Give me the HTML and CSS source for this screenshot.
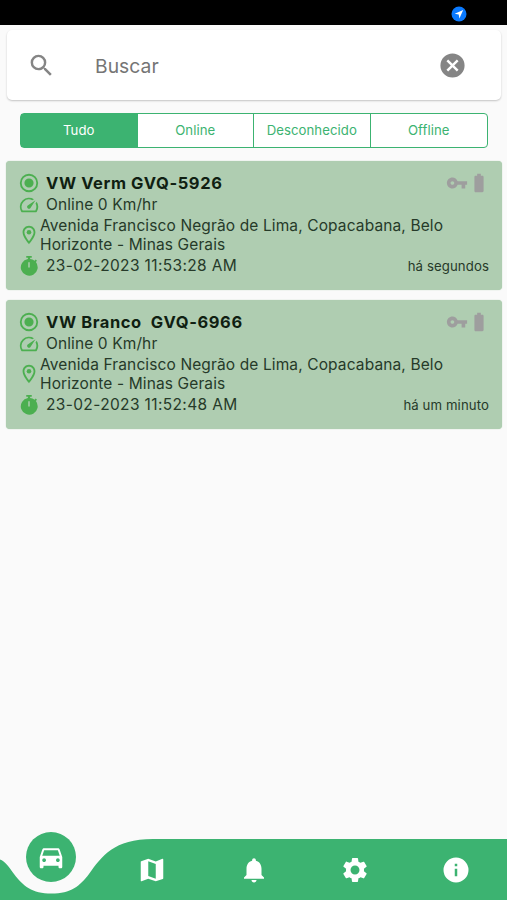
FILE: index.html
```html
<!DOCTYPE html>
<html lang="pt-BR">
<head>
<meta charset="utf-8">
<meta name="viewport" content="width=device-width, initial-scale=1">
<title>Veículos</title>
<link rel="stylesheet" href="styles.css">
</head>
<body>
<svg class="sprite" aria-hidden="true">
  <symbol id="radio" viewBox="0 0 24 24"><path d="M12 7a5 5 0 1 0 0 10 5 5 0 0 0 0-10zm0-5a10 10 0 1 0 0 20 10 10 0 0 0 0-20zm0 18a8 8 0 1 1 0-16 8 8 0 0 1 0 16z"/></symbol>
  <symbol id="speed" viewBox="0 0 24 24"><path d="M20.380 8.570l-1.230 1.850a8 8 0 0 1-.22 7.580H5.070A8 8 0 0 1 15.580 6.850l1.850-1.230A10 10 0 0 0 3.350 19a2 2 0 0 0 1.720 1h13.850a2 2 0 0 0 1.740-1 10 10 0 0 0-.27-10.440zm-9.790 6.840a2 2 0 0 0 2.830 0l5.660-8.490-8.490 5.660a2 2 0 0 0 0 2.830z"/></symbol>
  <symbol id="pin" viewBox="0 0 24 24"><path d="M12 2C8.130 2 5 5.130 5 9c0 5.250 7 13 7 13s7-7.750 7-13c0-3.870-3.130-7-7-7zM7 9c0-2.760 2.240-5 5-5s5 2.240 5 5c0 2.880-2.880 7.190-5 9.880C9.920 16.210 7 11.850 7 9z"/><circle cx="12" cy="9" r="2.500"/></symbol>
  <symbol id="timer" viewBox="0 0 24 24"><path d="M9 1h6v2h-1.800v1.300a9 9 0 0 1 4.900 1.900l1.200-1.200 1.400 1.400-1.200 1.300A9.200 9.200 0 1 1 10.800 4.300V3H9zM11.200 8v5.500h1.600V8z"/></symbol>
  <symbol id="key" viewBox="0 0 24 24"><path d="M12.650 10C11.830 7.670 9.610 6 7 6c-3.310 0-6 2.690-6 6s2.690 6 6 6c2.610 0 4.830-1.670 5.650-4H17v4h4v-4h2v-4H12.650zM7 14c-1.100 0-2-.9-2-2s.9-2 2-2 2 .9 2 2-.9 2-2 2z"/></symbol>
  <symbol id="battery" viewBox="0 0 24 24"><path d="M15.670 4H14V2h-4v2H8.330C7.600 4 7 4.600 7 5.330v15.330C7 21.400 7.600 22 8.330 22h7.330c.74 0 1.340-.6 1.340-1.330V5.330C17 4.600 16.400 4 15.670 4z"/></symbol>
</svg>

<div class="status">
  <svg class="status-location" viewBox="0 0 16 16"><circle cx="8" cy="8" r="7.500" fill="#0a7aff"/><path d="M12.200 3.900 3.700 7.700l4 .7.700 4z" fill="#fff"/></svg>
</div>

<label class="search">
  <svg class="search-icon" viewBox="0 0 24 24"><path d="M15.500 14h-.79l-.28-.27A6.471 6.471 0 0 0 16 9.500 6.500 6.500 0 1 0 9.500 16c1.610 0 3.090-.59 4.230-1.570l.27.28v.79l5 4.990L20.490 19l-4.990-5zm-6 0a4.500 4.500 0 1 1 0-9 4.500 4.500 0 0 1 0 9z"/></svg>
  <span class="search-text">Buscar</span>
  <svg class="search-icon" viewBox="0 0 24 24"><path d="M12 2a10 10 0 1 0 0 20 10 10 0 0 0 0-20zm5 13.590L15.590 17 12 13.410 8.410 17 7 15.590 10.590 12 7 8.410 8.410 7 12 10.590 15.590 7 17 8.410 13.410 12 17 15.590z"/></svg>
</label>

<div class="tabs">
  <div class="tab tab-active">Tudo</div>
  <div class="tab">Online</div>
  <div class="tab">Desconhecido</div>
  <div class="tab">Offline</div>
</div>

<main class="list">
  <article class="card">
    <div class="row row-title"><svg class="ico"><use href="#radio"/></svg><h2 class="name">VW Verm GVQ-5926</h2><span class="flags"><svg class="ico"><use href="#key"/></svg><svg class="ico"><use href="#battery"/></svg></span></div>
    <div class="row"><svg class="ico"><use href="#speed"/></svg><span class="text">Online 0 Km/hr</span></div>
    <div class="row row-address"><svg class="ico"><use href="#pin"/></svg><p class="address">Avenida Francisco Negrão de Lima, Copacabana, Belo<br>Horizonte - Minas Gerais</p></div>
    <div class="row"><svg class="ico"><use href="#timer"/></svg><span class="text date">23-02-2023 11:53:28 AM</span><span class="ago">há segundos</span></div>
  </article>
  <article class="card">
    <div class="row row-title"><svg class="ico"><use href="#radio"/></svg><h2 class="name">VW Branco&nbsp; GVQ-6966</h2><span class="flags"><svg class="ico"><use href="#key"/></svg><svg class="ico"><use href="#battery"/></svg></span></div>
    <div class="row"><svg class="ico"><use href="#speed"/></svg><span class="text">Online 0 Km/hr</span></div>
    <div class="row row-address"><svg class="ico"><use href="#pin"/></svg><p class="address">Avenida Francisco Negrão de Lima, Copacabana, Belo<br>Horizonte - Minas Gerais</p></div>
    <div class="row"><svg class="ico"><use href="#timer"/></svg><span class="text date">23-02-2023 11:52:48 AM</span><span class="ago">há um minuto</span></div>
  </article>
</main>

<nav class="nav">
  <svg class="nav-shape" viewBox="0 0 507 61"><path d="M0 20.500C5 22 9 28 14 35C23 47 32 54.500 51.500 54.500C71 54.500 80 47 89 35C102 17 114 0 153 0H507V61H0z"/></svg>
  <div class="nav-item"><span class="bubble"><svg class="nav-icon" viewBox="0 0 24 24"><path d="M18.920 6.010C18.720 5.420 18.160 5 17.500 5h-11c-.66 0-1.210.42-1.420 1.010L3 12v8c0 .55.45 1 1 1h1c.55 0 1-.45 1-1v-1h12v1c0 .55.45 1 1 1h1c.55 0 1-.45 1-1v-8l-2.080-5.990zM6.500 16c-.83 0-1.500-.67-1.500-1.500S5.670 13 6.500 13s1.500.67 1.500 1.500S7.330 16 6.500 16zm11 0c-.83 0-1.500-.67-1.500-1.500s.67-1.500 1.500-1.500 1.500.67 1.500 1.500-.67 1.500-1.500 1.500zM5 11l1.500-4.500h11L19 11H5z"/></svg></span></div>
  <div class="nav-item"><svg class="nav-icon" viewBox="0 0 24 24"><path d="M20.500 3l-.16.03L15 5.100 9 3 3.360 4.900c-.21.07-.36.25-.36.48V20.500c0 .28.22.5.5.5l.16-.03L9 18.900l6 2.100 5.640-1.900c.21-.07.36-.25.36-.48V3.500c0-.28-.22-.5-.5-.5zM15 19l-6-2.110V5l6 2.110V19z"/></svg></div>
  <div class="nav-item"><svg class="nav-icon" viewBox="0 0 24 24"><path d="M12 22c1.100 0 2-.9 2-2h-4c0 1.100.89 2 2 2zm6-6v-5c0-3.070-1.640-5.640-4.500-6.320V4c0-.83-.67-1.500-1.500-1.500s-1.500.67-1.500 1.500v.68C7.630 5.360 6 7.920 6 11v5l-2 2v1h16v-1l-2-2z"/></svg></div>
  <div class="nav-item"><svg class="nav-icon" viewBox="0 0 24 24"><path d="M19.140 12.940c.04-.3.06-.61.06-.94 0-.32-.02-.64-.07-.94l2.030-1.580c.18-.14.23-.41.12-.61l-1.920-3.320c-.12-.22-.37-.29-.59-.22l-2.390.96c-.5-.38-1.030-.7-1.620-.94l-.36-2.540c-.04-.24-.24-.41-.48-.41h-3.840c-.24 0-.43.17-.47.41l-.36 2.540c-.59.24-1.130.57-1.620.94l-2.390-.96c-.22-.08-.47 0-.59.22L2.740 8.870c-.12.21-.08.47.12.61l2.030 1.580c-.05.3-.09.63-.09.94s.02.64.07.94l-2.030 1.580c-.18.14-.23.41-.12.61l1.920 3.320c.12.22.37.29.59.22l2.390-.96c.5.38 1.030.7 1.620.94l.36 2.540c.05.24.24.41.48.41h3.840c.24 0 .44-.17.47-.41l.36-2.540c.59-.24 1.130-.56 1.620-.94l2.390.96c.22.08.47 0 .59-.22l1.920-3.320c.12-.22.07-.47-.12-.61l-2.010-1.580zM12 15.600c-1.980 0-3.600-1.620-3.600-3.600s1.620-3.600 3.600-3.600 3.600 1.620 3.600 3.600-1.620 3.600-3.600 3.600z"/></svg></div>
  <div class="nav-item"><svg class="nav-icon" viewBox="0 0 24 24"><path d="M12 2a10 10 0 1 0 0 20 10 10 0 0 0 0-20zm1 15h-2v-6h2v6zm0-8h-2V7h2v2z"/></svg></div>
</nav>
</body>
</html>
```
FILE: styles.css
```css
* { box-sizing: border-box; }

body {
  margin: 0;
  height: 900px;
  display: flex;
  flex-direction: column;
  overflow: hidden;
  background: #fafafa;
  font-family: Inter, "Liberation Sans", sans-serif;
  color: #263a29;
}

.sprite { position: absolute; width: 0; height: 0; }

.status {
  height: 25px;
  flex: none;
  display: flex;
  justify-content: flex-end;
  align-items: center;
  padding: 2px 40.500px 0 0;
  background: #000;
}
.status-location { width: 16px; height: 16px; }

.search {
  flex: none;
  display: flex;
  align-items: center;
  height: 70px;
  margin: 5px 6px 0 7px;
  padding: 1px 34.500px 0 19.500px;
  border-radius: 5px;
  background: #fff;
  box-shadow: 0 1px 2px rgba(0, 0, 0, .22);
}
.search-icon { width: 29px; height: 29px; fill: #858585; }
.search-text { flex: 1; padding: 1px 0 0 39.500px; font-size: 19.300px; letter-spacing: .05px; color: #757575; }

.tabs {
  flex: none;
  display: grid;
  grid-template-columns: repeat(4, 1fr);
  height: 35px;
  margin: 13px 19px 0 20px;
  border: 1px solid #3cb371;
  border-radius: 4px;
  background: #fff;
}
.tab {
  display: flex;
  align-items: center;
  justify-content: center;
  padding: 0 0 2px;
  font-size: 13.200px;
  letter-spacing: .05px;
  color: #3cb371;
}
.tab:not(:last-child) { border-right: 1px solid #3cb371; }
.tab-active { background: #3cb371; color: #fff; }

.list { flex: 1; padding: 13px 5px 0 6px; }

.card {
  height: 129px;
  margin-bottom: 10px;
  padding: 11px 13px 0 12px;
  border-radius: 4px;
  background: #afcdb1;
  box-shadow: 0 0 1px rgba(120, 180, 125, .7);
}
.row { display: flex; align-items: center; height: 21px; }
.ico { flex: none; width: 22px; height: 22px; fill: #4caf50; }
.row-title { height: 22px; }
.name { margin: 0 0 0 6px; font-size: 16.500px; font-weight: 700; letter-spacing: .6px; color: #101f12; }
.flags { display: flex; margin-right: -1px; margin-left: auto; }
.flags .ico { fill: #9e9e9e; }
.text { margin-left: 6px; font-size: 15.500px; letter-spacing: .11px; }
.date { letter-spacing: .36px; }
.row-address { height: 40px; }
.address { margin: 0; font-size: 15.500px; line-height: 19px; letter-spacing: .12px; white-space: nowrap; }
.ago { margin-left: auto; font-size: 13.200px; letter-spacing: .1px; }

.nav { position: relative; flex: none; display: flex; height: 61px; }
.nav-shape { position: absolute; inset: 0; width: 100%; height: 61px; fill: #3cb371; }
.nav-item { position: relative; flex: 1; display: flex; align-items: center; justify-content: center; }
.nav-icon { width: 30px; height: 30px; fill: #fff; }
.bubble {
  display: flex;
  align-items: center;
  justify-content: center;
  width: 50px;
  height: 50px;
  margin-bottom: 26px;
  border-radius: 50%;
  background: #3cb371;
}
```
